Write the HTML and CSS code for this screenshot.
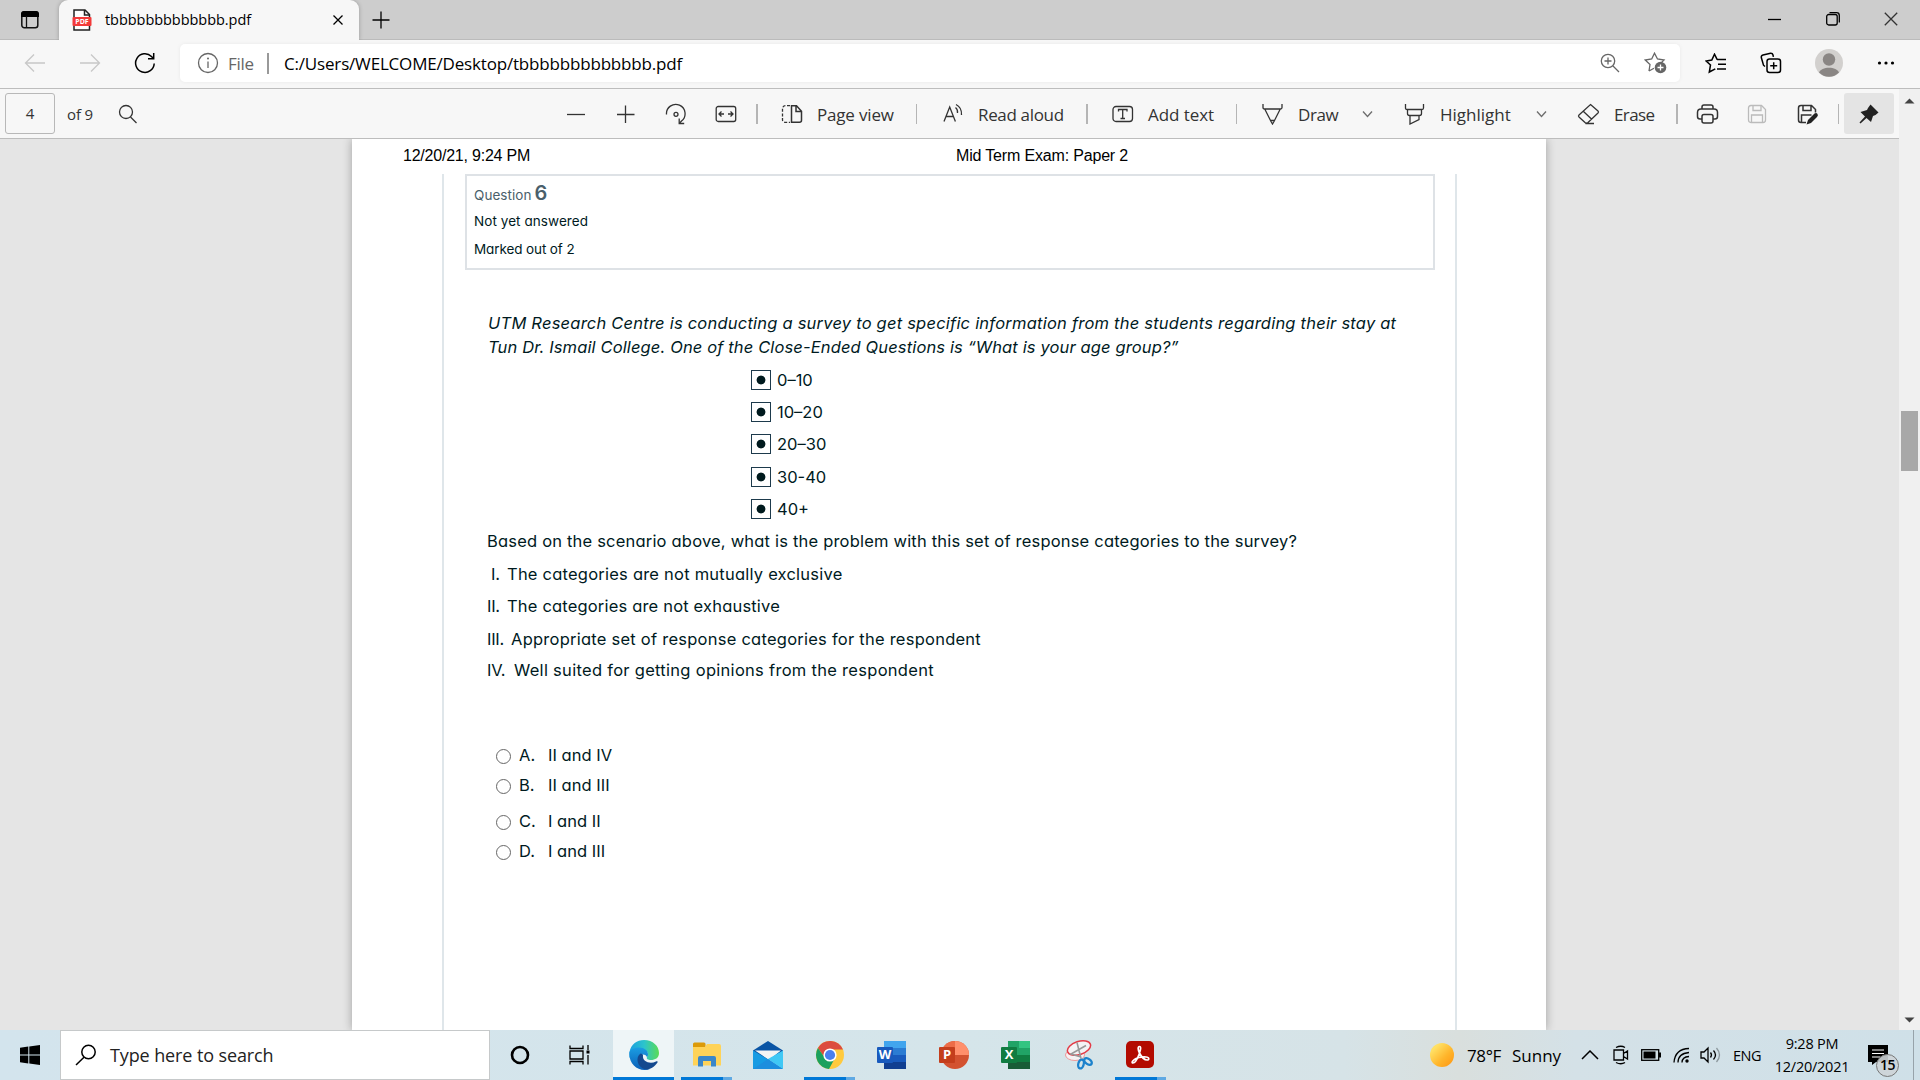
FILE: index.html
```html
<!DOCTYPE html>
<html lang="en">
<head>
<meta charset="utf-8">
<title>tbbbbbbbbbbbbb.pdf</title>
<link rel="stylesheet" href="styles.css">
</head>
<body>
<header class="tabs">
  <svg class="ico tab-actions" width="20" height="20" viewBox="0 0 20 20"><rect x="1.8" y="1.8" width="16" height="16" rx="2.5" fill="none" stroke="#111" stroke-width="1.5"/><path d="M1 7V4a3 3 0 0 1 3-3h12a3 3 0 0 1 3 3v3z" fill="#000"/><path d="M6.5 6v12" stroke="#111" stroke-width="1.3"/></svg>
  <div class="tab">
    <svg width="20" height="22" viewBox="0 0 20 22"><path d="M2 1h11l4.500 4.500V21H2z" fill="#fff" stroke="#222" stroke-width="1.5"/><path d="M12.500 1v5h5" fill="none" stroke="#222" stroke-width="1.500"/><rect x="0.500" y="8" width="19" height="9" rx="1" fill="#f23a3a"/><text x="10" y="15.200" class="pdf-label">PDF</text></svg>
    <span class="tab-title">tbbbbbbbbbbbbb.pdf</span>
    <svg width="12" height="12" viewBox="0 0 12 12"><path d="M1.500 1.500l9 9M10.500 1.500l-9 9" class="s dark"/></svg>
  </div>
  <svg class="new-tab" width="18" height="18" viewBox="0 0 18 18"><path d="M9 0.500v17M0.500 9h17" class="s dark"/></svg>
  <div class="win-buttons">
    <svg width="14" height="14" viewBox="0 0 14 14"><path d="M0 7.500h13" class="s dark"/></svg>
    <svg width="14" height="14" viewBox="0 0 14 14"><rect x="0.700" y="2.500" width="10.500" height="10.500" rx="2" class="s dark"/><path d="M3.500 0.700h7a2.800 2.800 0 0 1 2.800 2.800v7" class="s dark"/></svg>
    <svg width="14" height="14" viewBox="0 0 14 14"><path d="M0.800 0.800l12.400 12.400M13.200 0.800L0.800 13.200" class="s"/></svg>
  </div>
</header>

<nav class="address-row">
  <svg class="back" width="22" height="20" viewBox="0 0 22 20"><path d="M21 10H1.500M10 1.500L1.500 10l8.500 8.500" class="s off"/></svg>
  <svg class="forward" width="22" height="20" viewBox="0 0 22 20"><path d="M1 10h19.500M12 1.500l8.500 8.500-8.500 8.500" class="s off"/></svg>
  <svg class="reload" width="22" height="22" viewBox="0 0 22 22"><path d="M20.200 11.500A9.300 9.300 0 1 1 17.500 4.500L19.500 6.500" class="s dark w"/><path d="M19.700 1v5.800H14" class="s dark w"/></svg>
  <div class="address">
    <svg width="22" height="22" viewBox="0 0 22 22"><circle cx="11" cy="11" r="9.500" class="s grey"/><path d="M11 9.500v6.500" class="s grey"/><circle cx="11" cy="6.500" r="1" fill="#666"/></svg>
    <span class="scheme">File</span><i class="address-rule"></i>
    <span class="url">C:/Users/WELCOME/Desktop/tbbbbbbbbbbbbb.pdf</span>
    <svg class="zoom" width="20" height="20" viewBox="0 0 20 20"><circle cx="8" cy="8" r="6.700" class="s grey"/><path d="M13 13l6 6M8 4.500v7M4.500 8h7" class="s grey"/></svg>
    <svg class="fav" width="23" height="22" viewBox="0 0 23 22"><path d="M5 19l1-6.500L1.200 8l6.500-1L10.500 1.200l3 5.800 6.500 1-3 3M5 19l5-2.800" class="s grey"/><circle cx="16.500" cy="15.500" r="5.800" fill="#666"/><path d="M16.500 12.500v6M13.500 15.500h6" stroke="#fff" stroke-width="1.300"/></svg>
  </div>
  <svg class="favorites" width="22" height="21" viewBox="0 0 22 21"><path d="M12 6.500h9M13 11.200h8M12 16h9M12.200 6.700L9.500 1.200 6.800 7 1.200 8l4.300 4L4.300 19l6-3.200" class="s dark w"/></svg>
  <svg class="collections" width="22" height="22" viewBox="0 0 22 22"><rect x="7" y="7" width="13.500" height="13.500" rx="2.500" class="s dark w"/><path d="M13.700 10.200v7M10.200 13.700h7M5 14.500L3.500 13.200 1.300 5.500Q1 3.500 3 3L10.500 1.200Q12.500 1 13 3l.4 1.800" class="s dark w"/></svg>
  <svg class="avatar" width="28" height="28" viewBox="0 0 28 28"><circle cx="14" cy="14" r="14" fill="#d2d0ce"/><circle cx="14" cy="10.500" r="6.200" fill="#8a8684"/><path d="M4 23.500C6 17 22 17 24 23.500A14 14 0 0 1 4 23.500z" fill="#8a8684"/></svg>
  <svg class="more" width="18" height="6" viewBox="0 0 18 6"><circle cx="2.500" cy="3" r="1.600"/><circle cx="9" cy="3" r="1.600"/><circle cx="15.500" cy="3" r="1.600"/></svg>
</nav>

<div class="viewer">
  <div class="viewer-main">
    <div class="toolbar">
      <span class="page-no">4</span><span class="of">of 9</span>
      <svg class="m24" width="20" height="20" viewBox="0 0 20 20"><circle cx="8" cy="8" r="6.500" class="s"/><path d="M12.500 13l6 6" class="s"/></svg>
      <svg class="m428" width="20" height="20" viewBox="0 0 20 20"><path d="M1 10.500h18" class="s"/></svg>
      <svg class="m30" width="20" height="20" viewBox="0 0 20 20"><path d="M1 10.500h17.500M9.500 1.500v17.500" class="s"/></svg>
      <svg class="m29" width="22" height="22" viewBox="0 0 22 22"><path d="M1.500 11.500A9.300 9.300 0 1 1 16.500 18l-2 2.300" class="s"/><path d="M14.200 15.500v5h5" class="s"/><circle cx="11" cy="11.300" r="2" class="s"/></svg>
      <svg class="m28" width="22" height="18" viewBox="0 0 22 18"><rect x="1.200" y="1.500" width="19.500" height="15" rx="2" class="s"/><path d="M9 9H4.500M6.500 6.500L4 9l2.500 2.500M13 9h4.500M15.500 6.500L18 9l-2.500 2.500" class="s"/></svg>
      <i class="rule thick m19"></i>
      <svg class="m23" width="22" height="20" viewBox="0 0 22 20"><path d="M9 1.700H4.500a3 3 0 0 0-3 3V16a2.500 2.500 0 0 0 2.500 2.300h5" class="s" stroke-dasharray="3 1.600"/><path d="M10.500 1.700h5l5 5.500v9a2 2 0 0 1-2 2h-8zM15 1.700v5.800h5.500" class="s w"/></svg>
      <span class="label m14 page-view">Page view</span>
      <i class="rule m21"></i>
      <svg class="m26" width="21" height="22" viewBox="0 0 21 22"><path d="M1 18.500L6.700 4l5.700 14.500M3 13.500h7.500M12.500 4.500q2.500 2 2 5.500M13 1.500q6 3 5.500 10.500" class="s"/></svg>
      <span class="label m14 read">Read aloud</span>
      <i class="rule thick m22"></i>
      <svg class="m24" width="22" height="18" viewBox="0 0 22 18"><rect x="1" y="1.500" width="19.500" height="15" rx="3" class="s"/><path d="M6.500 6.500V4.500h8.500v2M10.700 4.500v9M8.500 13.500H13" class="s"/></svg>
      <span class="label m14 add">Add text</span>
      <i class="rule m22"></i>
      <svg class="m25" width="21" height="22" viewBox="0 0 21 22"><path d="M1 1v3.500q0 1.500 1.500 1.500h16q1.500 0 1.500-1.500V1M3 6.500l6 12 1.500 2.500 1.500-2.500 6-12M8.500 17.500h4" class="s"/></svg>
      <span class="label m15 draw">Draw</span>
      <svg class="m23 chev" width="11" height="8" viewBox="0 0 11 8"><path d="M1 1.500L5.500 6.500 10 1.500" class="s"/></svg>
      <svg class="m31" width="21" height="22" viewBox="0 0 21 22"><path d="M1.500 1v4q0 1.500 1.500 1.500h15q1.500 0 1.500-1.500V1M3.500 6.500v4q0 2 2 2h10q2 0 2-2v-4M6 12.500V21l9-4.500v-4" class="s"/></svg>
      <span class="label m15 highlight">Highlight</span>
      <svg class="m24 chev" width="11" height="8" viewBox="0 0 11 8"><path d="M1 1.500L5.500 6.500 10 1.500" class="s"/></svg>
      <svg class="m30" width="23" height="22" viewBox="0 0 23 22"><path d="M13.500 1.500L21 8q1 1 0 2L11 19.500q-1.500 1.300-3 0L2 14q-1-1 0-2zM6.500 8.500l8 7.500M8.500 20.500H17" class="s"/></svg>
      <span class="label m14 erase">Erase</span>
      <i class="rule thick m21"></i>
      <svg class="m18" width="23" height="20" viewBox="0 0 23 20"><path d="M6 5V3q0-2 2-2h7q2 0 2 2v2M6 15H4q-2.500 0-2.500-2.500v-4Q1.500 5 5 5h13q3.500 0 3.500 3.500v4Q21.500 15 19 15h-2" class="s w"/><rect x="6" y="10.500" width="11" height="8.500" rx="2" class="s w"/></svg>
      <svg class="m28" width="20" height="20" viewBox="0 0 20 20"><g class="pale"><path d="M1.500 4q0-2.500 2.500-2.500h10.500l4 4V16q0 2.500-2.500 2.500H4Q1.500 18.500 1.500 16z" class="s"/><path d="M6 1.500v5h8v-5M4.500 18.500v-7.500h11v7.500" class="s"/></g></svg>
      <svg class="m30" width="22" height="22" viewBox="0 0 22 22"><path d="M9 19.500H4Q1.500 19.500 1.500 17V5q0-2.500 2.500-2.500h10.500l4 4v3M6 2.500v5h8v-5M4.500 19.500V12h10" class="s w"/><path d="M17.500 10.500q2-1 3 .5t-.5 3L14 20l-4.500 1.500L11 17z" fill="#222"/></svg>
      <i class="rule m19"></i>
      <span class="pin"><svg width="22" height="22" viewBox="0 0 22 22"><path d="M12.500 1.500L20.500 9.500 17.500 12 15 13l-2 6L8.500 15 2.500 20.500 1.500 19.500 7 13.500 2.500 9 9 7l1-2z" fill="#222"/></svg></span>
    </div>
    <main class="canvas">
      <article class="sheet">
        <div class="print-head"><span class="stamp">12/20/21, 9:24 PM</span><span class="doc-title">Mid Term Exam: Paper 2</span></div>
        <div class="frame">
          <section class="info">
            <p class="q-no">Question <b>6</b></p><p class="state">Not yet answered</p><p class="grade">Marked out of 2</p>
          </section>
          <section class="question">
            <p class="intro"><span class="t1">UTM Research Centre is conducting a survey to get specific information from the students regarding their stay at</span><br><span class="t2">Tun Dr. Ismail College. One of the Close-Ended Questions is “What is your age group?”</span></p>
            <ul class="ages">
              <li>0–10</li><li>10–20</li><li>20–30</li><li class="drop">30-40</li><li>40+</li>
            </ul>
            <p class="row ask">Based on the scenario above, what is the problem with this set of response categories to the survey?</p>
            <p class="row drop s1"><span class="num one">I.</span>The categories are not mutually exclusive</p>
            <p class="row s2"><span class="num two">II.</span>The categories are not exhaustive</p>
            <p class="row drop s3"><span class="num three">III.</span>Appropriate set of response categories for the respondent</p>
            <p class="row lift s4"><span class="num four">IV.</span>Well suited for getting opinions from the respondent</p>
            <div class="answers">
              <div class="answer"><i></i><span>A.</span>II and IV</div>
              <div class="answer"><i></i><span>B.</span>II and III</div>
              <div class="answer third"><i></i><span>C.</span>I and II</div>
              <div class="answer"><i></i><span>D.</span>I and III</div>
            </div>
          </section>
        </div>
      </article>
    </main>
  </div>
  <div class="scrollbar">
    <svg width="11" height="6" viewBox="0 0 11 6"><path d="M0.500 5.500L5.500 0.500l5 5z" fill="#444"/></svg>
    <i class="thumb"></i>
    <svg class="down" width="11" height="6" viewBox="0 0 11 6"><path d="M0.500 0.500l5 5 5-5z" fill="#444"/></svg>
  </div>
</div>

<footer class="taskbar">
  <svg class="start" width="20" height="20" viewBox="0 0 20 20"><path d="M0 2.800L8.300 1.600V9.500H0zM9.300 1.500L20 0v9.500H9.300zM0 10.500h8.300v7.900L0 17.200zM9.300 10.500H20V20L9.300 18.500z"/></svg>
  <div class="search"><svg width="22" height="22" viewBox="0 0 22 22"><circle cx="13.500" cy="8" r="6.700" class="s dark w"/><path d="M9 13.200L1 21" class="s dark w"/></svg><span>Type here to search</span></div>
  <svg class="cortana" width="20" height="20" viewBox="0 0 20 20"><circle cx="10" cy="10" r="8" fill="none" stroke="#000" stroke-width="2.600"/></svg>
  <svg class="taskview" width="22" height="20" viewBox="0 0 22 20"><path d="M1 0.500v3h13v-3M1 19.500v-3h13v3M1 6h13v8H1zM19 0v5M19 10v9.500" class="s dark"/><rect x="17.500" y="5.500" width="3" height="3"/></svg>
  <div class="app edge active">
    <svg width="32" height="32" viewBox="0 0 32 32"><defs><linearGradient id="e1" x1="0" x2="1"><stop offset="0" stop-color="#1a9fe0"/><stop offset=".5" stop-color="#2cc4cc"/><stop offset="1" stop-color="#5bdc55"/></linearGradient><linearGradient id="e2" x1="0" y1="0" x2="0" y2="1"><stop offset="0" stop-color="#1b9de2"/><stop offset="1" stop-color="#0a5fb8"/></linearGradient></defs><path d="M1.500 13C3 5 9 1 16 1c9 0 15 6 15 13 0 5-4 7-8 7-3 0-5-1-4-3 2-4 0-7-5-7C8 11 3 15 1.500 19z" fill="url(#e1)"/><path d="M1.500 13C4 8 14 7 18 11c3 3 2 6 1 7-2-4-8-3-8 2 0 6 6 9 11 10-11 4-22-5-20.500-17z" fill="url(#e2)"/><path d="M12.500 14.500C7 18 9 29 18 30.500c4 0 8.500-2.500 11.500-7 .500-1-.5-1.500-1.500-1-6 3-14 0-13-6 .1-1-1-2-2.500-2z" fill="#14498f"/></svg>
  </div>
  <div class="app folder open">
    <svg width="30" height="26" viewBox="0 0 30 26"><path d="M1 2q0-1.500 1.500-1.500H12q1.500 0 1.500 1.500v3H1z" fill="#dc9a09"/><path d="M1 5h12l2-3h12q2 0 2 2v19.500H1z" fill="#ffd358"/><path d="M6 24.500V16q0-2 2-2h14q2 0 2 2v8.500h-5V19h-8v5.500z" fill="#3b87c9"/></svg>
  </div>
  <svg class="mail" width="30" height="30" viewBox="0 0 30 30"><path d="M0 10.500L15 1l15 9.500V20H0z" fill="#0a55a5"/><path d="M2 10.500h26L16 20z" fill="#f4f4f4"/><path d="M0 10.500L16 20l14 9H0z" fill="#179be3"/><path d="M30 10.500V29L15 19z" fill="#40c8f5"/><path d="M0 29L15 19l15 10z" fill="#1d8ede"/></svg>
  <div class="app chrome open">
    <svg width="30" height="30" viewBox="0 0 30 30"><circle cx="15" cy="15" r="14" fill="#ffca3e"/><path d="M2.900 8A14 14 0 0 1 28 9.500H15L10 18z" fill="#dc4c3f"/><path d="M2.900 8A14 14 0 0 0 14 29l6-11-10 0z" fill="#1ba15e"/><circle cx="15" cy="15" r="6.600" fill="#fff"/><circle cx="15" cy="15" r="5.100" fill="#4a80ee"/></svg>
  </div>
  <svg class="word" width="30" height="30" viewBox="0 0 30 30"><path d="M7 1h22v8H7z" fill="#41a5ee"/><path d="M7 8h22v7H7z" fill="#2b7cd3"/><path d="M7 15h22v7H7z" fill="#185abd"/><path d="M7 22h22v7H7z" fill="#103f91"/><rect x="0" y="7" width="16" height="16" rx="1" fill="#185abd"/><text x="8" y="19" class="office">W</text></svg>
  <svg class="ppt" width="30" height="30" viewBox="0 0 30 30"><circle cx="16" cy="15" r="14" fill="#d35230"/><path d="M16 1a14 14 0 0 1 14 14H16z" fill="#ff8f6b"/><path d="M16 1v14H2A14 14 0 0 1 16 1z" fill="#ed6c47"/><rect x="0" y="7" width="16" height="16" rx="1" fill="#c43e1c"/><text x="8" y="19" class="office">P</text></svg>
  <svg class="excel" width="30" height="30" viewBox="0 0 30 30"><path d="M7 1h11v14H7z" fill="#21a366"/><path d="M18 1h11v7H18z" fill="#33c481"/><path d="M18 8h11v7H18z" fill="#21a366"/><path d="M7 15h11v7H7zM18 15h11v7H18z" fill="#107c41"/><path d="M7 22h22v7H7z" fill="#185c37"/><rect x="0" y="7" width="16" height="16" rx="1" fill="#107c41"/><text x="8" y="19" class="office">X</text></svg>
  <svg class="snip" width="30" height="30" viewBox="0 0 30 30"><ellipse cx="11" cy="15" rx="9.500" ry="5.500" fill="#f5f2f4" stroke="#e99" stroke-width="1"/><ellipse cx="15" cy="8" rx="12" ry="6.500" transform="rotate(-18 15 8)" fill="#f3f3f5" stroke="#e33b47" stroke-width="1.500"/><path d="M13 2.500l4 16M22 5.500L7 14l10 3" stroke="#999" stroke-width="1.600" fill="none"/><g fill="none" stroke="#1c82cc" stroke-width="2.300"><ellipse cx="17" cy="24" rx="2.700" ry="4.500" transform="rotate(15 17 24)"/><ellipse cx="24" cy="21.500" rx="2.600" ry="4.300" transform="rotate(-55 24 21.500)"/></g></svg>
  <div class="app acrobat open">
    <svg width="30" height="30" viewBox="0 0 30 30"><rect x="1" y="1" width="28" height="27" rx="5" fill="#b30b00"/><path d="M14.500 6.500c-2 0-1.500 3.500 0 6.500 2 4 5 7 7.500 7s2.500-2.800-1-3-9 .800-11.500 2.500-3 3.500-1.500 3.500c2 0 4.500-4.500 6-8.500s2.500-8 .5-8z" fill="none" stroke="#fff" stroke-width="1.700"/></svg>
  </div>
  <div class="weather"><i class="sun"></i><span class="deg">78°F</span><span class="sunny">Sunny</span></div>
  <svg class="up" width="18" height="10" viewBox="0 0 18 10"><path d="M1 9l8-8 8 8" class="s dark w"/></svg>
  <svg class="meet" width="16" height="20" viewBox="0 0 16 20"><path d="M3 2.500q5-2.500 9 0M3 17.500q5 2.500 9 0M1 5h9.500v10H1zM10.500 8.500L14.500 6v8l-4-2.500" class="s dark"/></svg>
  <svg class="battery" width="20" height="12" viewBox="0 0 20 12"><rect x="0.700" y="0.700" width="17" height="10.600" class="s dark"/><path d="M2.500 2.500h12v7h-12zM18 3.500h2v5h-2z"/></svg>
  <svg class="wifi" width="17" height="17" viewBox="0 0 17 17"><path d="M1 15.500Q2 2 16 1.500M5 15.500Q5 6.500 16 5.500M9 15.500Q9 10 16 9.500" class="s dark"/><circle cx="14" cy="14" r="1.700"/></svg>
  <svg class="volume" width="21" height="18" viewBox="0 0 21 18"><path d="M1 6h3l4-4v14l-4-4H1zM10.500 6.500q2 2.500 0 5M13.500 4.500q4 4.500 0 9" class="s dark"/><path d="M16.500 2q6 7 0 14" class="s fade"/></svg>
  <span class="lang">ENG</span>
  <div class="clock"><span class="time">9:28 PM</span><span class="date">12/20/2021</span></div>
  <div class="notes"><svg width="20" height="20" viewBox="0 0 20 20"><path d="M0 0h20v17H8l-4 3v-3H0z"/><path d="M4 5h12M4 8.500h12M4 12h8" stroke="#fff" stroke-width="1.200"/></svg><span class="badge">15</span></div>
  <i class="peek"></i>
</footer>
</body>
</html>
```
FILE: styles.css
```css
* { box-sizing: border-box; }
body { margin: 0; width: 1920px; height: 1080px; overflow: hidden; display: flex; flex-direction: column; font-family: "Open Sans", "Noto Sans", sans-serif; color: #000; }
svg { display: block; flex: none; }
p, ul { margin: 0; padding: 0; list-style: none; }
i { display: block; flex: none; }
.s { fill: none; stroke: #333; stroke-width: 1.3; }
.dark { stroke: #000; }
.w { stroke-width: 1.5; }
.grey { stroke: #666; }
.off { stroke: #c8c8c8; }
.pale .s { stroke: #bbb; }
.fade { stroke: #8c979c; }
span { white-space: nowrap; flex: none; }

.tabs { height: 40px; flex: none; display: flex; background: #cdcdcd; box-shadow: inset 0 -1px #bbb; }
.tab-actions { margin: 10px 0 0 20px; }
.tab { margin-left: 19px; width: 300px; height: 40px; display: flex; align-items: center; background: #f7f7f7; border-radius: 9px 9px 0 0; padding: 0 16px 0 13px; box-shadow: 0 0 4px rgba(0,0,0,.25); clip-path: inset(0 -5px 0 -5px); }
.tab-title { margin: -1px 0 0 13px; width: 227px; font-size: 14.5px; letter-spacing: -.05px; }
.pdf-label { font: 700 7px "Open Sans", sans-serif; fill: #fff; text-anchor: middle; }
.new-tab { margin: 11px 0 0 13px; }
.win-buttons { margin: 12px 22px 0 auto; display: flex; gap: 44px; }

.address-row { height: 49px; flex: none; display: flex; align-items: center; padding-bottom: 2px; background: #f7f7f7; border-bottom: 1px solid #bdbdbd; }
.back { margin-left: 24px; }
.forward { margin-left: 33px; }
.reload { margin-left: 33px; }
.address { margin-left: 24px; width: 1500px; height: 38px; background: #fff; border-radius: 5px; display: flex; align-items: center; padding-left: 17px; box-shadow: 0 0 4px rgba(0,0,0,.06); font-size: 17px; }
.scheme { margin-left: 9px; width: 26px; color: #666; letter-spacing: -.3px; }
.address-rule { width: 2px; height: 21px; margin-left: 13px; background: #999; }
.url { margin-left: 15px; width: 402px; letter-spacing: -.18px; }
.zoom { margin-left: 914px; }
.fav { margin-left: 24px; }
.favorites { margin-left: 25px; }
.collections { margin-left: 33px; }
.avatar { margin-left: 33px; }
.more { margin-left: 34px; }

.viewer { flex: 1; min-height: 0; display: flex; }
.viewer-main { width: 1899px; flex: none; display: flex; flex-direction: column; }
.toolbar { height: 50px; flex: none; display: flex; align-items: center; background: #f7f7f7; border-bottom: 1px solid #bdbdbd; color: #333; }
.page-no { margin-left: 5px; width: 50px; height: 41px; border: 1px solid #b8b8b8; border-radius: 3px; text-align: center; line-height: 39px; font-size: 15px; }
.of { margin-left: 12px; width: 27px; font-size: 15px; letter-spacing: -.13px; }
.rule { width: 1px; height: 20px; background: #b5b5b5; }
.rule.thick { width: 2px; }
.label { font-size: 17px; padding-top: 1px; }
.page-view { width: 78px; letter-spacing: -.18px; }
.read { width: 86px; letter-spacing: -.34px; }
.add { width: 66px; letter-spacing: -.07px; }
.draw { width: 41px; letter-spacing: -.4px; }
.highlight { width: 72px; letter-spacing: 0; }
.erase { width: 41px; letter-spacing: -.6px; }
.chev { opacity: .7; }
.pin { margin-left: 5px; width: 50px; height: 41px; border-radius: 3px; background: #e4e4e4; display: flex; align-items: center; justify-content: center; }
.m14 { margin-left: 14px; } .m15 { margin-left: 15px; } .m18 { margin-left: 18px; } .m19 { margin-left: 19px; }
.m21 { margin-left: 21px; } .m22 { margin-left: 22px; } .m23 { margin-left: 23px; } .m24 { margin-left: 24px; }
.m25 { margin-left: 25px; } .m26 { margin-left: 26px; } .m28 { margin-left: 28px; } .m29 { margin-left: 29px; }
.m30 { margin-left: 30px; } .m31 { margin-left: 31px; } .m428 { margin-left: 428px; }

.canvas { flex: 1; background: #e5e5e5; overflow: hidden; display: flex; }
.sheet { margin-left: 352px; width: 1194px; background: #fff; box-shadow: 0 0 9px rgba(0,0,0,.3); display: flex; flex-direction: column; font-family: Inter, sans-serif; font-feature-settings: "cv11"; color: #001a1e; }
.print-head { height: 35px; line-height: 34px; display: flex; font-family: "Liberation Sans", Arial, sans-serif; font-size: 16px; color: #000; }
.stamp { margin-left: 51px; width: 553px; letter-spacing: -.22px; }
.doc-title { letter-spacing: -.17px; }
.frame { flex: 1; margin: 0 90px 0 90px; width: 1015px; border: solid #dfe6ea; border-width: 0 2px; }
.info { margin-left: 21px; width: 970px; height: 96px; border: 2px solid #dee2e6; padding-left: 7px; font-size: 13.5px; }
.q-no { height: 31px; line-height: 39px; color: #4a5f6b; letter-spacing: .06px; }
.q-no b { font-size: 20px; font-weight: 600; line-height: 20px; margin-left: -1px; }
.state { height: 28px; line-height: 28px; letter-spacing: .07px; }
.grade { height: 28px; line-height: 28px; letter-spacing: -.11px; }
.question { margin: 41px 0 0 43px; font-size: 16.5px; white-space: nowrap; }
.intro { line-height: 24px; font-style: italic; height: 53px; padding-left: 1px; }
.t1 { letter-spacing: .22px; }
.t2 { letter-spacing: .136px; }
.ages { margin-left: 264px; }
.ages li { height: 32px; display: flex; align-items: center; }
.ages li::before { content: ""; width: 18px; height: 18px; margin-right: 6px; border: 1.5px solid #1d3a4c; background: radial-gradient(circle, #001a1e 4px, transparent 4.800px); }
.ages li.drop, .row.drop { margin-top: 1px; }
.row { height: 32px; line-height: 32px; display: flex; }
.row.lift { margin-top: -1px; }
.ask { letter-spacing: .194px; }
.s1 { letter-spacing: .225px; } .s2 { letter-spacing: .18px; } .s3 { letter-spacing: .244px; } .s4 { letter-spacing: .29px; }
.num { letter-spacing: -.3px; }
.one { padding-left: 4px; }
.one, .two { width: 20px; } .three { width: 24px; } .four { width: 27px; }
.answers { margin: 54px 0 0 9px; }
.answer { height: 30px; display: flex; align-items: center; letter-spacing: .02px; }
.answer.third { margin-top: 6px; }
.answer i { width: 15px; height: 15px; border: 1.3px solid #666; border-radius: 50%; margin: 2px 8px 0 0; }
.answer span { width: 29px; }

.scrollbar { width: 21px; background: #f0f0f0; display: flex; flex-direction: column; align-items: center; padding: 9px 0 7px; }
.thumb { width: 17px; height: 60px; margin-top: 307px; background: #a8a8a8; }
.down { margin-top: auto; }

.taskbar { height: 50px; flex: none; display: flex; align-items: center; background: linear-gradient(90deg, #d3e4ed, #d5e5ea 50%, #d6e3e7 70%, #d9dfdd 76%, #d4e1e7 82%, #cfe0e8); }
.start { margin-left: 20px; }
.search { margin-left: 20px; width: 430px; height: 50px; border: 1px solid #c6c9ca; background: #fff; display: flex; align-items: center; padding-left: 14px; font-size: 18px; color: #222; letter-spacing: -.11px; }
.search span { margin-left: 13px; }
.cortana { margin-left: 20px; }
.taskview { margin-left: 39px; }
.app { height: 50px; display: flex; align-items: center; justify-content: center; flex: none; border-bottom: 3px solid #0078d7; padding-top: 2px; }
.active { margin-left: 22px; width: 61px; background: #eef5f7; }
.open { width: 51px; border-image: linear-gradient(90deg, #0078d7 41px, #5fa9e3 41px) 1; border-width: 0 0 3px; border-style: solid; }
.folder { margin-left: 7px; }
.mail { margin-left: 21px; }
.chrome { margin-left: 21px; }
.word { margin-left: 22px; }
.ppt { margin-left: 32px; }
.excel { margin-left: 32px; }
.snip { margin-left: 33px; }
.office { font: 700 13px "Open Sans", sans-serif; fill: #fff; text-anchor: middle; }
.acrobat { margin-left: 21px; padding-right: 1px; }
.weather { margin-left: 264px; width: 132px; display: flex; align-items: center; font-size: 17px; }
.sun { width: 24px; height: 24px; border-radius: 50%; background: linear-gradient(135deg, #ffe064 20%, #ffb52b 60%, #ff9410); }
.deg { margin: 1px 0 0 13px; width: 34px; letter-spacing: -.37px; }
.sunny { margin: 1px 0 0 11px; }
.up { margin-left: 19px; }
.meet { margin-left: 14px; }
.battery { margin-left: 12px; }
.wifi { margin-left: 12px; }
.volume { margin-left: 10px; }
.lang { margin-left: 12px; width: 28px; font-size: 14.5px; letter-spacing: -.5px; }
.clock { margin-left: 13px; width: 76px; height: 50px; display: flex; flex-direction: column; align-items: center; font-size: 14.5px; line-height: 23px; padding-top: 2px; letter-spacing: -.25px; }
.notes { margin-left: 18px; position: relative; }
.badge { position: absolute; left: 8px; top: 9px; width: 23px; height: 23px; border: 1px solid #777; border-radius: 50%; background: rgba(205,212,215,.9); text-align: center; font-size: 14px; line-height: 20px; font-weight: 600; letter-spacing: -.5px; }
.peek { margin-left: 25px; width: 1px; height: 50px; background: #97a3aa; }
```
